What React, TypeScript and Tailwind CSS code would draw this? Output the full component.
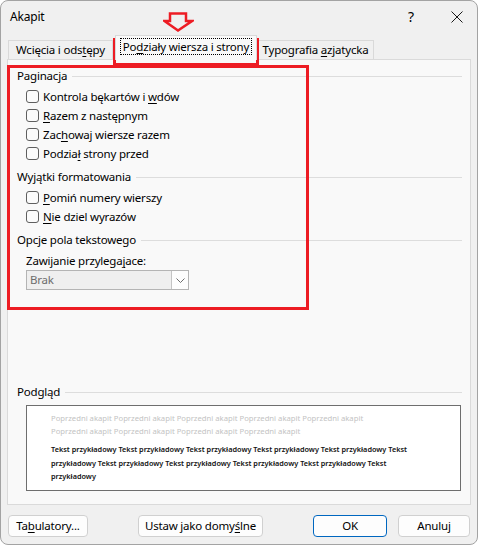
import React from 'react';

const U = ({ children }: { children: React.ReactNode }) => (
  <span className="underline underline-offset-[2px] decoration-1">{children}</span>
);

interface CheckRowProps {
  children: React.ReactNode;
}

const CheckRow = ({ children }: CheckRowProps) => (
  <div className="flex items-center h-[19px] pl-[9px]">
    <span className="w-[13px] h-[13px] rounded-[3px] border border-[#5f5f5f] bg-[#fbfbfb] shrink-0" />
    <span className="ml-[4px] leading-none whitespace-nowrap">{children}</span>
  </div>
);

const SectionHeader = ({ title, className = '' }: { title: React.ReactNode; className?: string }) => (
  <div className={`flex items-center h-[18px] ${className}`}>
    <span className="leading-none whitespace-nowrap">{title}</span>
    <span className="flex-1 h-px bg-[#dddddd] ml-[5px]" />
  </div>
);

const Button = ({ children, className = '' }: { children: React.ReactNode; className?: string }) => (
  <button
    className={`h-[22px] rounded-[4px] border bg-[#fdfdfd] text-black flex items-center justify-center ${className}`}
  >
    <span className="leading-none whitespace-nowrap">{children}</span>
  </button>
);

const App = () => {
  return (
    <div
      className="relative w-[478px] h-[545px] bg-[#f0f0f0] border border-[#a3a3a3] rounded-[8px] overflow-hidden text-[11.5px] tracking-[-0.2px] text-black"
      style={{ fontFamily: '"Noto Sans", "Open Sans", sans-serif' }}
    >
      {/* title bar */}
      <div className="flex items-center h-[32px] pl-[9px]">
        <span className="leading-none text-[12px]">Akapit</span>
        <span className="ml-auto text-[14px] leading-none mr-[37px]">?</span>
        <svg width="12" height="12" viewBox="0 0 12 12" className="mr-[14px]">
          <path d="M0.5 0.5 L11.5 11.5 M11.5 0.5 L0.5 11.5" stroke="#1a1a1a" strokeWidth="1" />
        </svg>
      </div>

      {/* tabs */}
      <div className="flex items-end h-[26px] pl-[7px]">
        <div className="h-[19px] w-[105px] flex items-center justify-center border border-b-0 border-[#d9d9d9] bg-[#f0f0f0]">
          <span className="leading-none whitespace-nowrap">
            Wcięcia i ods<U>t</U>ępy
          </span>
        </div>
        <div className="h-[25px] w-[142px] ml-[2px] -mb-px relative z-10 bg-[#f9f9f9] border border-b-0 border-[#d9d9d9] flex items-start justify-center pt-[2px]">
          <span className="h-[17px] w-[132px] border border-dotted border-black flex items-center justify-center">
            <span className="leading-none whitespace-nowrap">
              Po<U>d</U>ziały wiersza i strony
            </span>
          </span>
        </div>
        <div className="h-[19px] w-[117px] flex items-center justify-center border border-b-0 border-[#d9d9d9] bg-[#f0f0f0]">
          <span className="leading-none whitespace-nowrap">
            Typografia <U>a</U>zjatycka
          </span>
        </div>
      </div>

      {/* tab panel */}
      <div className="mx-[6px] h-[446px] border border-[#dadada] bg-[#f9f9f9] pt-[7px] pl-[9px] pr-[8px] flex flex-col">
        <SectionHeader title="Paginacja" />
        <div className="mt-[2px]">
          <CheckRow>
            Kontrola bękartów i <U>w</U>dów
          </CheckRow>
          <CheckRow>
            <U>R</U>azem z następnym
          </CheckRow>
          <CheckRow>
            Zac<U>h</U>owaj wiersze razem
          </CheckRow>
          <CheckRow>
            Podzia<U>ł</U> strony przed
          </CheckRow>
        </div>

        <SectionHeader title="Wyjątki formatowania" className="mt-[5px]" />
        <div className="mt-[2px]">
          <CheckRow>
            <U>P</U>omiń numery wierszy
          </CheckRow>
          <CheckRow>
            <U>N</U>ie dziel wyrazów
          </CheckRow>
        </div>

        <SectionHeader title="Opcje pola tekstowego" className="mt-[5px]" />
        <div className="pl-[9px] mt-[4px] h-[16px] flex items-center">
          <span className="leading-none whitespace-nowrap">
            Zawijanie przylega<U>j</U>ace:
          </span>
        </div>
        <div className="ml-[9px] mt-[1px] w-[163px] h-[20px] border border-[#b4b4b4] bg-[#efefef] flex items-center">
          <span className="pl-[3px] text-[#6d6d6d] leading-none flex-1">Brak</span>
          <span className="w-[17px] h-[18px] bg-[#fdfdfd] border-l border-[#c4c4c4] flex items-center justify-center">
            <svg width="9" height="5" viewBox="0 0 9 5">
              <path d="M0.5 0.5 L4.5 4.5 L8.5 0.5" fill="none" stroke="#6d6d6d" strokeWidth="1" />
            </svg>
          </span>
        </div>

        <SectionHeader title="Podgląd" className="mt-auto" />
        <div className="mt-[4px] ml-[9px] mr-[1px] mb-[13px] h-[86px] bg-white border border-[#6e6e6e] pl-[24px] pt-[6px] leading-[13px] tracking-normal whitespace-nowrap">
          <div className="text-[#c3c3c3] text-[7.7px]">
            Poprzedni akapit Poprzedni akapit Poprzedni akapit Poprzedni akapit Poprzedni akapit
            <br />
            Poprzedni akapit Poprzedni akapit Poprzedni akapit Poprzedni akapit
          </div>
          <div className="mt-[5px] leading-[13.5px] text-[7.3px] font-semibold text-[#111111]">
            Tekst przykładowy Tekst przykładowy Tekst przykładowy Tekst przykładowy Tekst przykładowy Tekst
            <br />
            przykładowy Tekst przykładowy Tekst przykładowy Tekst przykładowy Tekst przykładowy Tekst
            <br />
            przykładowy
          </div>
        </div>
      </div>

      {/* buttons */}
      <div className="flex mt-[10px] px-[7px]">
        <Button className="w-[80px] border-[#d0d0d0]">
          Ta<U>b</U>ulatory...
        </Button>
        <Button className="w-[125px] ml-[50px] border-[#d0d0d0]">
          Ustaw jako domy<U>ś</U>lne
        </Button>
        <Button className="w-[74px] ml-[50px] border-[#0067c0]">OK</Button>
        <Button className="w-[72px] ml-[11px] border-[#d0d0d0]">Anuluj</Button>
      </div>

      {/* annotations */}
      <svg className="absolute left-[162px] top-[11px]" width="31" height="20" viewBox="0 0 31 20">
        <polygon
          points="7,1.5 23,1.5 23,9 29,9 15,18.5 1.5,9 7,9"
          fill="none"
          stroke="#ed1c24"
          strokeWidth="2.5"
          strokeLinejoin="miter"
        />
      </svg>
      <div className="absolute left-[112px] top-[37px] w-[146px] h-[28px] border-[3px] border-[#ed1c24]" />
      <div className="absolute left-[6px] top-[64px] w-[302px] h-[245px] border-[3px] border-[#ed1c24]" />
    </div>
  );
};

export default App;
